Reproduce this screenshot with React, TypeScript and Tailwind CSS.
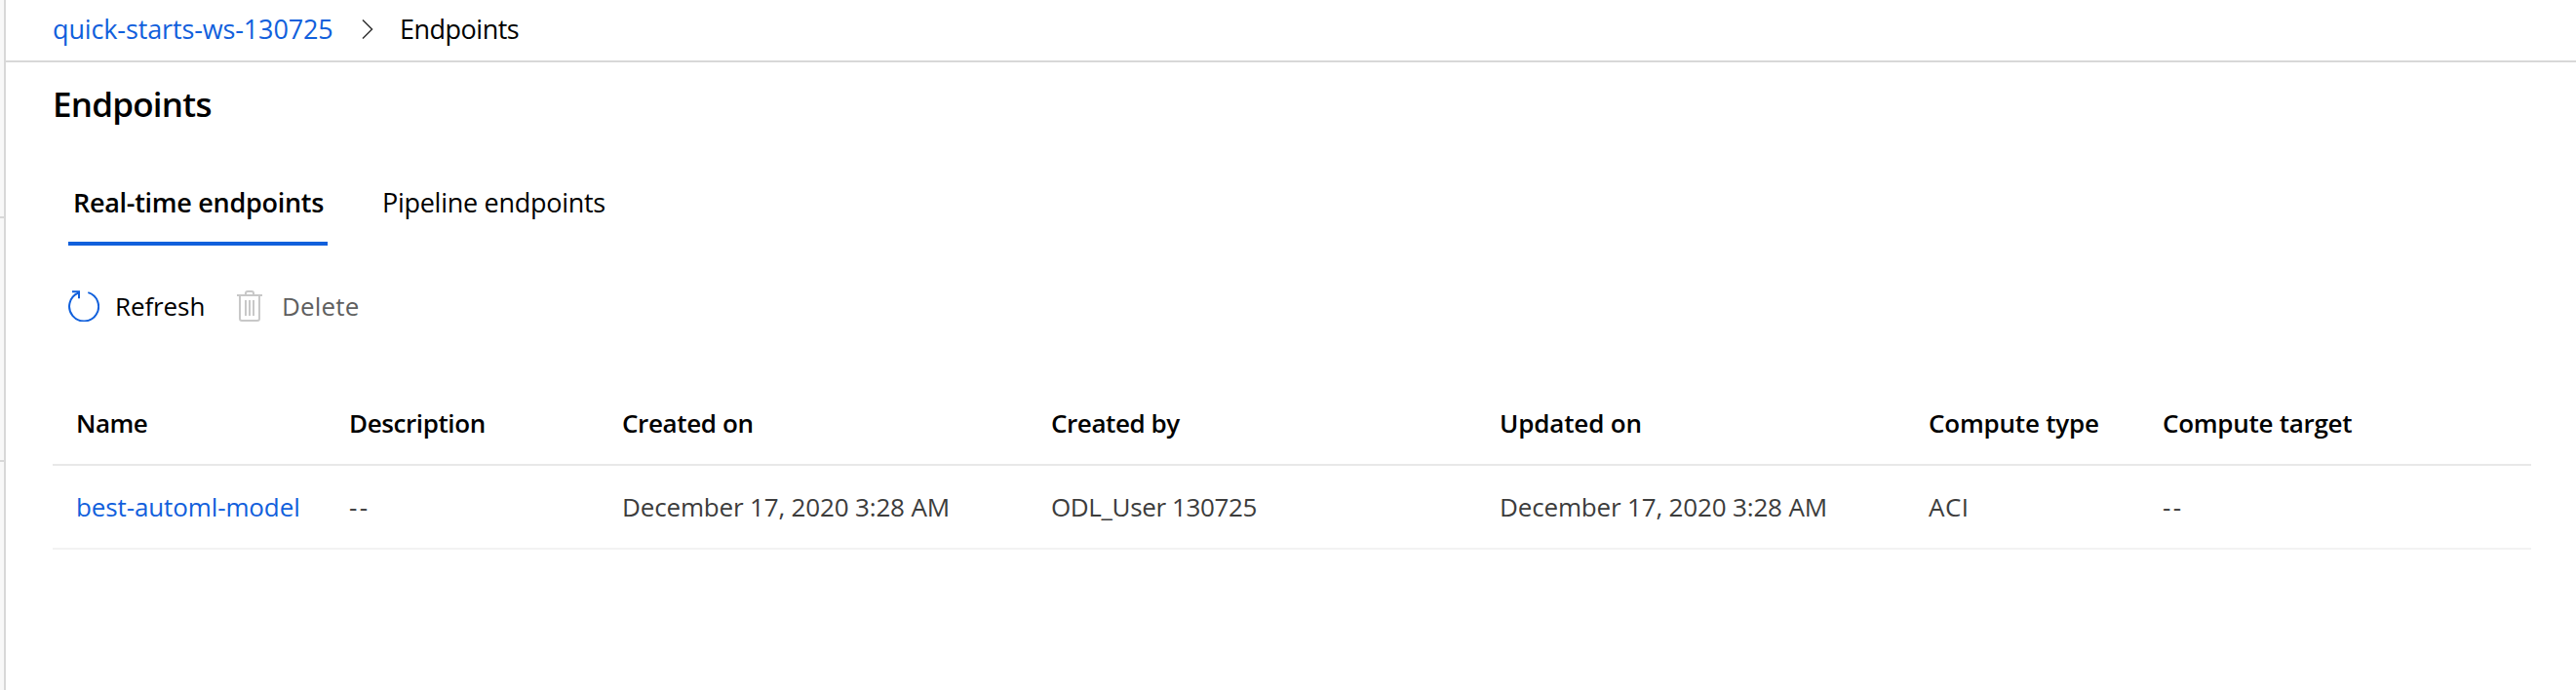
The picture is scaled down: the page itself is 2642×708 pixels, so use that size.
import React from "react";

const columns = [
  { label: "Name", head: "tracking-[-0.47px]", value: "best-automl-model", cell: "text-[#1160dc] tracking-[-0.12px]" },
  { label: "Description", head: "tracking-[-0.4px]", value: "--", cell: "tracking-[2.5px]" },
  { label: "Created on", head: "tracking-[-0.36px]", value: "December 17, 2020 3:28 AM", cell: "tracking-[-0.16px]" },
  { label: "Created by", head: "tracking-[-0.42px]", value: "ODL_User 130725", cell: "tracking-[-0.37px]" },
  { label: "Updated on", head: "tracking-[-0.15px]", value: "December 17, 2020 3:28 AM", cell: "tracking-[-0.16px]" },
  { label: "Compute type", head: "tracking-[-0.2px]", value: "ACI", cell: "tracking-[0.5px]" },
  { label: "Compute target", head: "tracking-[-0.28px]", value: "--", cell: "tracking-[2.5px]" },
];

const rowClass =
  "grid h-[86px] grid-cols-[280px_280px_440px_460px_440px_240px_1fr] items-center border-b-2 pl-6 text-[26px] leading-9 whitespace-nowrap";

function RefreshIcon() {
  return (
    <svg className="size-8" viewBox="0 0 32 32" fill="none" stroke="#1160dc" strokeWidth="2">
      <path d="M20.3 2.1A15 15 0 1 1 10.2 2.7" />
      <path d="M4 1.2h7v7" />
    </svg>
  );
}

function TrashIcon() {
  return (
    <svg className="h-8 w-[26px]" viewBox="0 0 26 32" fill="none" stroke="#c8c8c8" strokeWidth="2">
      <path d="M0 5h26M9 5V3q0-2 2-2h4q2 0 2 2v2" />
      <path d="M3 5v24q0 2 2 2h16q2 0 2-2V5" />
      <path d="M9 10v16M13 10v16M17 10v16" />
    </svg>
  );
}

export default function App() {
  return (
    <div className="flex h-[708px] w-full bg-white font-['Open_Sans','Noto_Sans',sans-serif] text-black">
      <aside className="flex w-1.5 shrink-0 flex-col border-r-2 border-[#d8d8d8] bg-[#f8f8f8]">
        <div className="h-56 border-b-2 border-[#d8d8d8]" />
        <div className="h-[250px] border-b-2 border-[#d8d8d8]" />
      </aside>
      <main className="min-w-0 flex-1">
        <nav className="flex h-16 items-center border-b-2 border-[#d8d8d8] pb-0.5 pl-12 text-[27px] leading-8 whitespace-nowrap">
          <a className="w-[317px] tracking-[-0.13px] text-[#1160dc]">quick-starts-ws-130725</a>
          <svg className="mr-[27px] h-5 w-3" viewBox="0 0 12 20" fill="none" stroke="#333" strokeWidth="1.5">
            <path d="M1 .5 10.5 10 1 19.5" />
          </svg>
          <span className="tracking-[-0.5px]">Endpoints</span>
        </nav>
        <div className="pr-[46px] pl-12">
          <h1 className="pt-[19px] text-[35px] leading-[48px] font-semibold tracking-[-0.77px]">Endpoints</h1>
          <div className="mt-9 flex gap-14 pl-4 text-[27px] leading-9 whitespace-nowrap">
            <button className="flex h-[85px] w-[266px] items-center border-b-4 border-[#1160dc] pl-[5px] font-semibold tracking-[-0.29px]">
              Real-time endpoints
            </button>
            <button className="flex h-[85px] items-center border-b-4 border-transparent tracking-[-0.28px]">
              Pipeline endpoints
            </button>
          </div>
          <div className="mt-[46px] flex h-8 items-center pl-4 text-[26px] leading-8">
            <RefreshIcon />
            <span className="ml-4 w-[125px] tracking-[-0.1px]">Refresh</span>
            <TrashIcon />
            <span className="ml-5 tracking-[0.15px] text-[#5f5f5f]">Delete</span>
          </div>
          <div className="mt-[62px]">
            <div className={`${rowClass} border-[#e8e8e8] font-semibold`}>
              {columns.map((c) => (
                <div key={c.label} className={c.head}>{c.label}</div>
              ))}
            </div>
            <div className={`${rowClass} border-[#f2f2f2] text-[#3c3c3c]`}>
              {columns.map((c) => (
                <div key={c.label} className={c.cell}>{c.value}</div>
              ))}
            </div>
          </div>
        </div>
      </main>
    </div>
  );
}
